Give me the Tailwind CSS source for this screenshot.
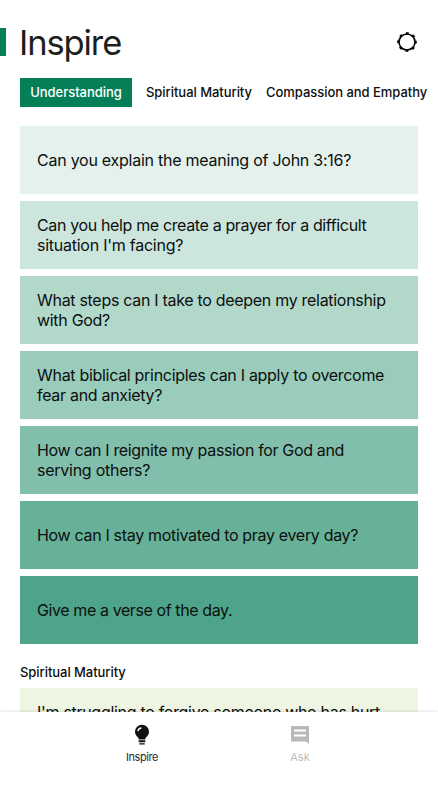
<!DOCTYPE html>
<html lang="en">
<head>
    <meta charset="UTF-8">
    <meta name="viewport" content="width=device-width, initial-scale=1.0">
    <title>Inspire</title>
    <script src="https://cdn.jsdelivr.net/npm/@tailwindcss/browser@4"></script>
</head>
<body class="h-screen flex flex-col overflow-hidden bg-white text-[#0c0f0e] font-['Inter',sans-serif]">
    <!-- Title -->
    <header class="flex items-center h-7 mt-7 shrink-0">
        <div class="w-1.5 h-7 bg-[#047f58]"></div>
        <h1 class="ml-[13px] pt-0.5 text-[34.5px] leading-none font-normal tracking-[-1.1px] text-[#1c1f1e]">Inspire</h1>
        <button class="ml-auto mr-5" aria-label="Settings">
            <svg class="w-[22px] h-[22px]" viewBox="0 0 22 22" fill="none" stroke="#000">
                <circle cx="11" cy="11" r="8" stroke-width="1.6"/>
                <circle cx="11" cy="11" r="8.7" stroke-width="2.2" stroke-dasharray="2.8 4.033" stroke-dashoffset="1.4"/>
            </svg>
        </button>
    </header>

    <!-- Categories -->
    <nav class="flex items-center h-7 mt-[22px] pl-5 shrink-0 whitespace-nowrap text-[13px] font-medium tracking-[-0.04px]">
        <a class="flex items-center justify-center w-28 h-[29px] pt-px shrink-0 bg-[#047f58] text-white">Understanding</a>
        <a class="ml-3.5 pt-0.5 w-[106px] shrink-0">Spiritual Maturity</a>
        <a class="ml-3.5 pt-0.5">Compassion and Empathy</a>
    </nav>

    <main class="flex-1 min-h-0 overflow-hidden mt-5 px-5 text-base leading-5 tracking-[-0.3px]">
        <div class="flex flex-col gap-[7px]">
            <div class="h-[68px] px-[17px] flex items-center bg-[#e4f1ed] tracking-[-0.25px]"><p>Can you explain the meaning of John 3:16?</p></div>
            <div class="h-[68px] px-[17px] flex items-center bg-[#cce5dd] tracking-[-0.36px]"><p>Can you help me create a prayer for a difficult<br><span class="tracking-[-0.25px]">situation I'm facing?</span></p></div>
            <div class="h-[68px] px-[17px] flex items-center bg-[#b2d8ca]"><p>What steps can I take to deepen my relationship<br>with God?</p></div>
            <div class="h-[68px] px-[17px] flex items-center bg-[#99ccbb]"><p>What biblical principles can I apply to overcome<br>fear and anxiety?</p></div>
            <div class="h-[68px] px-[17px] flex items-center bg-[#81beab] tracking-[-0.34px]"><p>How can I reignite my passion for God and<br><span class="tracking-[-0.25px]">serving others?</span></p></div>
            <div class="h-[68px] px-[17px] flex items-center bg-[#67b199] tracking-[-0.32px]"><p>How can I stay motivated to pray every day?</p></div>
            <div class="h-[68px] px-[17px] flex items-center bg-[#4ea48a] tracking-[-0.4px]"><p>Give me a verse of the day.</p></div>
        </div>

        <h2 class="mt-[18px] text-[13px] font-medium tracking-[-0.05px]">Spiritual Maturity</h2>
        <div class="mt-[6px] h-[68px] px-[17px] pt-3.5 bg-[#eff5e3]"><p>I'm struggling to forgive someone who has hurt</p></div>
    </main>

    <!-- Tab bar -->
    <footer class="relative flex justify-center h-[88px] pl-1 shrink-0 bg-white shadow-[0_0_4px_rgba(0,0,0,0.16)] text-[11px] leading-4 tracking-[-0.4px]">
        <div class="w-[158px] flex flex-col items-center pt-3 text-[#2a2a2a]">
            <svg class="w-4 h-[22px]" viewBox="0 0 16 22">
                <path fill="#111" d="M8 .8a7 7 0 0 0-7 7c0 2.6 1.5 4.2 2.8 5.4.6.6.9 1.2.9 2.3h6.6c0-1.1.3-1.7.9-2.3C13.5 12 15 10.4 15 7.8a7 7 0 0 0-7-7z"/>
                <path fill="#111" d="M4.7 16.3h6.6v2H4.7zM5.3 19.2h5.4v1.4H5.3z"/>
                <path fill="none" stroke="#fff" stroke-width="1.5" stroke-linecap="round" d="M4 6.500C4.400 5 5.400 4.200 6.900 3.900"/>
            </svg>
            <span class="mt-[3px]">Inspire</span>
        </div>
        <div class="w-[158px] flex flex-col items-center pt-3 text-[#bdbdbd] tracking-normal">
            <svg class="w-[18px] h-[22px]" viewBox="0 0 18 22" fill="#b9b9b9">
                <path fill-rule="evenodd" d="M0 2h18v18l-3-2.5H0zM3 5.5v2h12v-2zM3 10.5v2h12v-2z"/>
            </svg>
            <span class="mt-[3px]">Ask</span>
        </div>
    </footer>
</body>
</html>
